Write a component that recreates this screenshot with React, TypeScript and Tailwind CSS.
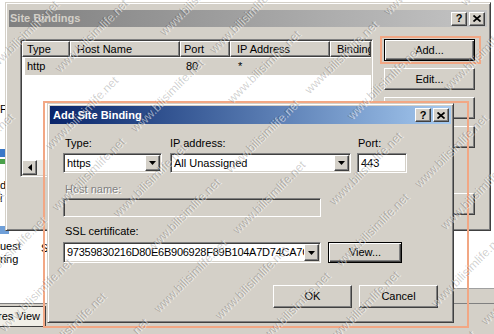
import clsx from "clsx"

const raised =
  "border border-t-white border-l-white border-r-[#404040] border-b-[#404040] shadow-[inset_-1px_-1px_0_#808080]"
const sunken =
  "border border-t-[#808080] border-l-[#808080] border-r-white border-b-white shadow-[inset_1px_1px_0_#404040,inset_-1px_-1px_0_#d4d0c8]"
const frame =
  "border border-t-[#d4d0c8] border-l-[#d4d0c8] border-r-[#404040] border-b-[#404040] shadow-[inset_1px_1px_0_#ffffff,inset_-1px_-1px_0_#808080]"

function Btn({ label, isDefault = false, className = "" }: { label: string; isDefault?: boolean; className?: string }) {
  return (
    <div
      className={clsx(
        "flex items-center justify-center bg-[#d4d0c8] text-[11px] leading-none text-black",
        isDefault
          ? "border border-black shadow-[inset_1px_1px_0_#ffffff,inset_-1px_-1px_0_#404040,inset_-2px_-2px_0_#808080]"
          : raised,
        className
      )}
    >
      {label}
    </div>
  )
}

function CaptionButtons() {
  return (
    <div className="flex gap-[2px]">
      <div className={clsx("flex h-[14px] w-[16px] items-center justify-center bg-[#d4d0c8] text-[11px] font-bold leading-none text-black", raised)}>
        ?
      </div>
      <div className={clsx("flex h-[14px] w-[16px] items-center justify-center bg-[#d4d0c8]", raised)}>
        <svg width="8" height="7" viewBox="0 0 8 7">
          <path d="M0.5 0.5 L7.5 6.5 M7.5 0.5 L0.5 6.5" stroke="#000" strokeWidth="1.7" />
        </svg>
      </div>
    </div>
  )
}

function DownArrow() {
  return (
    <svg width="7" height="4" viewBox="0 0 7 4">
      <path d="M0 0h7L3.5 4z" fill="#000" />
    </svg>
  )
}

function Combo({ value, className = "", textClass = "" }: { value: string; className?: string; textClass?: string }) {
  return (
    <div className={clsx("flex bg-white p-[1px]", sunken, className)}>
      <div className={clsx("flex flex-1 items-center overflow-hidden whitespace-nowrap pl-[2px] text-[11px] text-black", textClass)}>{value}</div>
      <div className={clsx("flex w-[15px] shrink-0 items-center justify-center bg-[#d4d0c8]", raised)}>
        <DownArrow />
      </div>
    </div>
  )
}

// diagonal site watermark printed over the whole screenshot
function Watermark() {
  const items = Array.from({ length: 220 })
  return (
    <div className="pointer-events-none absolute inset-0 overflow-hidden">
      <div className="absolute left-[-253px] top-[-333px] flex h-[1000px] w-[1000px] -rotate-45 flex-wrap content-start gap-x-[14px] gap-y-[30px]">
        {items.map((_, i) => (
          <span
            key={i}
            className={clsx(
              "whitespace-nowrap text-[12px] text-black/20 [text-shadow:1px_1px_0_rgba(255,255,255,0.55)]",
              Math.floor(i / 9) % 2 === 1 && "ml-[50px]"
            )}
          >
            www.bilisimlife.net
          </span>
        ))}
      </div>
    </div>
  )
}

export default function App() {
  return (
    <div className="relative h-[334px] w-[494px] overflow-hidden bg-white font-['Liberation_Sans',Arial,sans-serif] text-black">
      {/* IIS manager behind */}
      <div className="absolute left-0 top-[104px] text-[11px] leading-none">F</div>
      <div className="absolute left-0 top-[149px] h-[8px] w-[5px] bg-[#3a78c8]" />
      <div className="absolute left-0 top-[159px] h-[5px] w-[5px] bg-[#4aa04a]" />
      <div className="absolute left-0 top-[180px] text-[11px] leading-none">d</div>
      <div className="absolute left-0 top-[193px] text-[11px] leading-none">i</div>
      <div className="absolute left-0 top-[226px] h-[8px] w-[9px] bg-[#6f9fd8]" />
      <div className="absolute left-0 top-[241px] text-[11px] leading-none">uest</div>
      <div className="absolute left-0 top-[254px] text-[11px] leading-none">ring</div>
      <div className="absolute left-[41px] top-[243px] text-[11px] leading-none">S</div>
      <div className="absolute left-[440px] top-[288px] h-[46px] w-[60px] border-t border-[#a0a0a0] bg-[#d4d0c8]" />
      <div className="absolute left-0 top-[303px] h-[31px] w-[494px] border-t border-[#808080] bg-[#d4d0c8]" />
      <div className="absolute left-[-20px] top-[306px] flex h-[21px] w-[66px] items-center justify-end border border-[#404040] bg-[#f1efe8] pr-[5px] text-[11px]">
        res View
      </div>

      {/* Site Bindings */}
      <div className={clsx("absolute left-[5px] top-[2px] h-[229px] w-[486px] bg-[#d4d0c8] px-[3px] pt-[7px]", frame)}>
        <div className="flex h-[17px] items-center justify-between bg-linear-to-r from-[#808080] to-[#c4c4c4] pl-[1px] pr-[2px]">
          <span className="text-[11px] font-bold text-[#d4d0c8]">Site Bindings</span>
          <CaptionButtons />
        </div>
        <div className="mt-[12px] flex pl-[11px]">
          <div className={clsx("flex h-[138px] w-[353px] flex-col bg-white p-[1px]", sunken)}>
            <div className="flex h-[16px] text-[11px]">
              {[
                ["Type", "w-[48px] pl-[4px]"],
                ["Host Name", "w-[110px] pl-[6px]"],
                ["Port", "w-[50px] pl-[3px]"],
                ["IP Address", "w-[100px] pl-[6px]"],
                ["Binding Information", "flex-1 pl-[6px]"],
              ].map(([t, c]) => (
                <div key={t} className={clsx("flex items-center overflow-hidden whitespace-nowrap bg-[#d4d0c8]", raised, c)}>
                  {t}
                </div>
              ))}
            </div>
            <div className="ml-[3px] mt-[1px] flex h-[17px] items-center bg-[#d4d0c8] text-[11px]">
              <div className="w-[45px] pl-[2px]">http</div>
              <div className="w-[110px]" />
              <div className="w-[50px] pl-[6px]">80</div>
              <div className="w-[100px] pl-[8px]">*</div>
            </div>
            <div className="flex-1" />
            <div className="flex h-[15px] bg-[#ebe9e4]">
              <div className={clsx("flex w-[15px] items-center justify-center bg-[#d4d0c8]", raised)}>
                <svg width="4" height="7" viewBox="0 0 4 7">
                  <path d="M4 0v7L0 3.5z" fill="#000" />
                </svg>
              </div>
            </div>
          </div>
          <div className="ml-[11px] flex w-[91px] flex-col gap-[7px]">
            <Btn label="Add..." isDefault className="h-[22px]" />
            <Btn label="Edit..." className="h-[22px]" />
            <Btn label="Remove" className="h-[22px]" />
            <Btn label="Browse" className="h-[22px]" />
            <Btn label="Close" className="mt-[38px] h-[22px]" />
          </div>
        </div>
      </div>

      {/* Add Site Binding */}
      <div className={clsx("absolute left-[47px] top-[103px] h-[220px] w-[407px] bg-[#d4d0c8] p-[2px]", frame)}>
        <div className="flex h-[18px] items-center justify-between bg-linear-to-r from-[#0a246a] to-[#a6caf0] pl-[3px] pr-[2px]">
          <span className="text-[11px] font-bold text-white">Add Site Binding</span>
          <CaptionButtons />
        </div>
        <div className="px-[13px] text-[11px]">
          <div className="mt-[13px] flex">
            <div className="w-[99px]">
              <div className="h-[13px] pl-[2px] leading-[13px]">Type:</div>
              <Combo value="https" className="mt-[3px] h-[20px]" />
            </div>
            <div className="ml-[8px] w-[181px]">
              <div className="h-[13px] leading-[13px]">IP address:</div>
              <Combo value="All Unassigned" className="mt-[3px] h-[20px]" />
            </div>
            <div className="ml-[6px] w-[50px]">
              <div className="h-[13px] pl-[1px] leading-[13px]">Port:</div>
              <div className={clsx("mt-[3px] flex h-[20px] items-center bg-white pl-[3px]", sunken)}>443</div>
            </div>
          </div>
          <div className="mt-[10px] h-[13px] pl-[2px] leading-[13px] text-[#808080] [text-shadow:1px_1px_0_#ffffff]">Host name:</div>
          <div className={clsx("mt-[2px] h-[19px] w-[258px] bg-[#d4d0c8]", sunken)} />
          <div className="mt-[8px] h-[13px] pl-[2px] leading-[13px]">SSL certificate:</div>
          <div className="mt-[4px] flex">
            <Combo
              value="97359830216D80E6B906928F89B104A7D74CA7C"
              textClass="tracking-[-0.25px]"
              className="h-[21px] w-[258px]"
            />
            <Btn label="View..." isDefault className="ml-[7px] h-[21px] w-[74px]" />
          </div>
          <div className="mt-[22px] flex justify-end gap-[7px]">
            <Btn label="OK" className="h-[23px] w-[79px]" />
            <Btn label="Cancel" className="h-[23px] w-[79px]" />
          </div>
        </div>
      </div>

      {/* annotation marks */}
      <div className="pointer-events-none absolute left-[380px] top-[36px] h-[28px] w-[101px] border-2 border-[#f2a784]" />
      <div className="pointer-events-none absolute left-[43px] top-[101px] h-[227px] w-[426px] border-2 border-[#f2a784]" />

      <Watermark />
    </div>
  )
}
